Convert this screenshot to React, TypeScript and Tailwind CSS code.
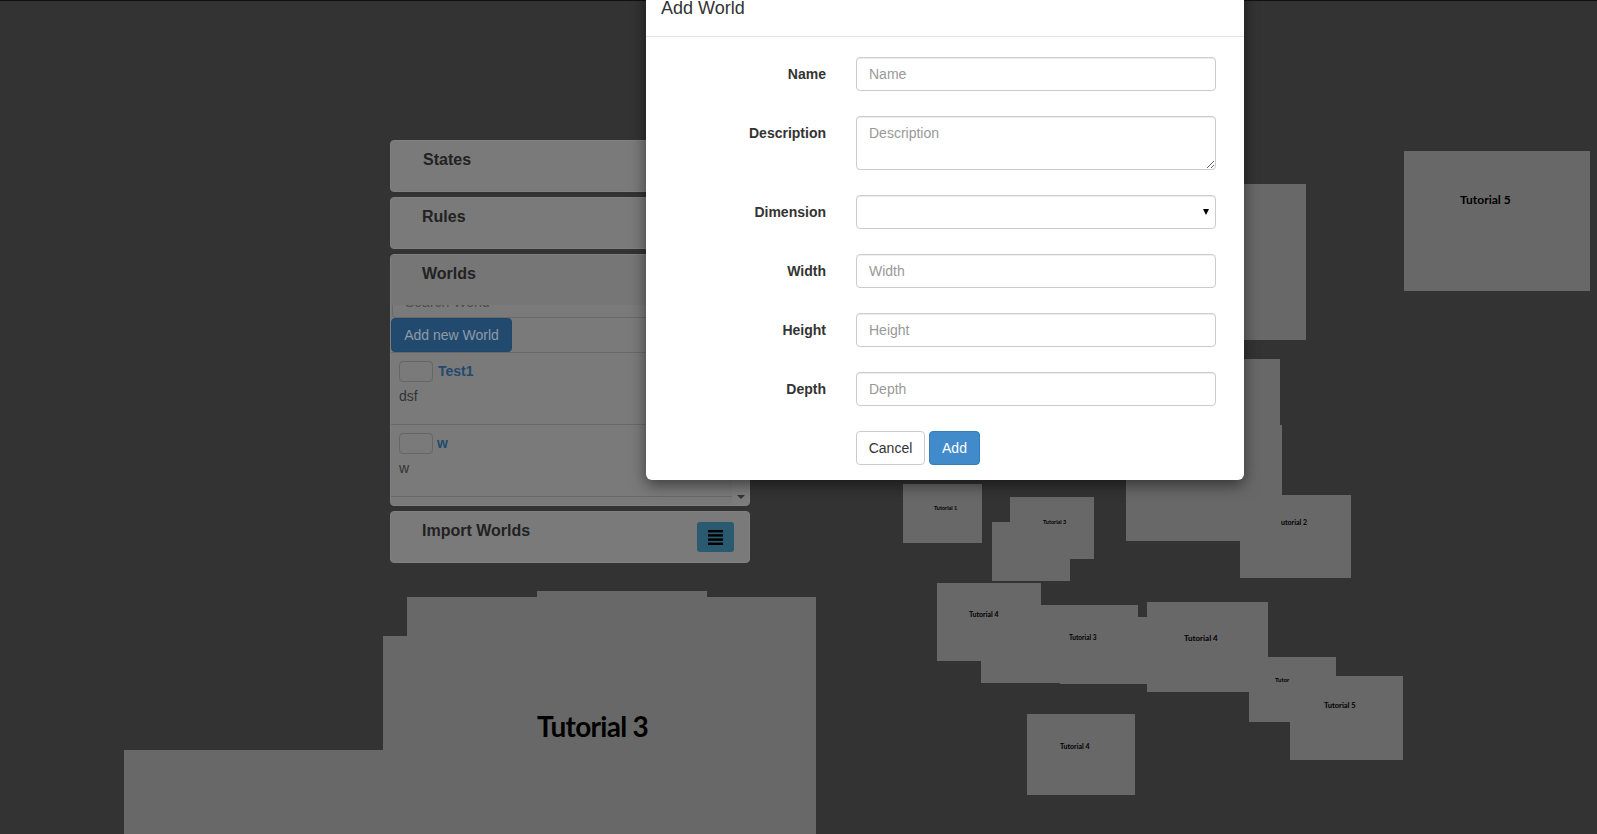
const blocks = [
  "left-[124px] top-[750px] w-[692px] h-[84px]",
  "left-[383px] top-[636px] w-[433px] h-[198px]",
  "left-[407px] top-[597px] w-[409px] h-[237px]",
  "left-[537px] top-[591px] w-[170px] h-[100px]",
  "left-[1404px] top-[151px] w-[186px] h-[140px]",
  "left-[1100px] top-[184px] w-[206px] h-[156px]",
  "left-[1100px] top-[359px] w-[180px] h-[70px]",
  "left-[1126px] top-[425px] w-[156px] h-[116px]",
  "left-[1240px] top-[495px] w-[111px] h-[83px]",
  "left-[903px] top-[484px] w-[79px] h-[59px]",
  "left-[1010px] top-[497px] w-[84px] h-[62px]",
  "left-[992px] top-[522px] w-[78px] h-[59px]",
  "left-[937px] top-[583px] w-[104px] h-[78px]",
  "left-[981px] top-[605px] w-[157px] h-[78px]",
  "left-[1060px] top-[617px] w-[90px] h-[67px]",
  "left-[1147px] top-[602px] w-[121px] h-[90px]",
  "left-[1249px] top-[657px] w-[87px] h-[65px]",
  "left-[1290px] top-[676px] w-[113px] h-[84px]",
  "left-[1027px] top-[714px] w-[108px] h-[81px]",
];

const captions = [
  { text: "Tutorial 3", className: "left-[537px] top-[708px] text-[28px] leading-[36px] tracking-[-0.7px]" },
  { text: "Tutorial 5", className: "left-[1460px] top-[192px] text-[12px] leading-[16px]" },
  { text: "Tutorial 1", className: "left-[934px] top-[504px] text-[5.5px] leading-[8px]" },
  { text: "Tutorial 3", className: "left-[1043px] top-[518px] text-[5.5px] leading-[8px]" },
  { text: "utorial 2", className: "left-[1281px] top-[517px] text-[7px] leading-[10px]" },
  { text: "Tutorial 4", className: "left-[969px] top-[609px] text-[7px] leading-[10px]" },
  { text: "Tutorial 3", className: "left-[1069px] top-[633px] text-[6.5px] leading-[10px]" },
  { text: "Tutorial 4", className: "left-[1184px] top-[632px] text-[8px] leading-[12px]" },
  { text: "Tutor", className: "left-[1275px] top-[675px] text-[6px] leading-[10px]" },
  { text: "Tutorial 5", className: "left-[1324px] top-[701px] text-[7.5px] leading-[10px]" },
  { text: "Tutorial 4", className: "left-[1060px] top-[741px] text-[7px] leading-[10px]" },
];

const fields = [
  { label: "Name", h: "h-[34px]" },
  { label: "Description", h: "h-[54px]", area: true },
  { label: "Dimension", h: "h-[34px]", select: true },
  { label: "Width", h: "h-[34px]" },
  { label: "Height", h: "h-[34px]" },
  { label: "Depth", h: "h-[34px]" },
];

const inputClass =
  "block w-full rounded border border-[#ccc] bg-white px-3 py-1.5 text-sm leading-5 text-[#555] shadow-[inset_0_1px_1px_rgba(0,0,0,0.075)] placeholder:text-[#999]";

function Panel({ title, left = "pl-8" }: { title: string; left?: string }) {
  return (
    <div className="h-[52px] rounded border border-[#808080] bg-[#7a7a7a]">
      <h3 className={`pt-[7px] text-base leading-[23px] font-bold text-[#222] ${left}`}>{title}</h3>
    </div>
  );
}

function WorldRow({ name, desc, gap }: { name: string; desc: string; gap: string }) {
  return (
    <div className="h-[72px] border-b border-[#696969] px-2 pt-2">
      <div className={`flex items-center ${gap}`}>
        <span className="h-[21px] w-[34px] rounded border border-[#666] bg-[#7a7a7a]" />
        <a className="-mt-[1px] text-sm leading-5 font-bold text-[#224a6e]">{name}</a>
      </div>
      <p className="mt-[4px] text-sm leading-5 text-[#333]">{desc}</p>
    </div>
  );
}

export default function App() {
  return (
    <div className="relative h-[834px] w-full overflow-hidden bg-[#333] font-['Liberation_Sans',Arial,sans-serif]">
      {/* world tiles on the canvas */}
      {blocks.map((b) => (
        <div key={b} className={`absolute bg-[#686868] ${b}`} />
      ))}
      {captions.map((c) => (
        <span
          key={c.className}
          className={`absolute font-['Lato',sans-serif] font-bold whitespace-nowrap text-black ${c.className}`}
        >
          {c.text}
        </span>
      ))}

      {/* thin dark line along the top of the page */}
      <div className="absolute inset-x-0 top-0 h-px bg-[#111]" />

      {/* side panels */}
      <div className="relative ml-[390px] flex w-[360px] flex-col gap-[5px] pt-[140px]">
        <Panel title="States" />
        <Panel title="Rules" left="pl-[31px]" />

        <div className="flex h-[252px] flex-col overflow-hidden rounded border border-[#808080] bg-[#7a7a7a]">
          <div className="h-[50px] shrink-0 bg-[#767676] pt-[7px] pl-[31px] text-base leading-[23px] font-bold text-[#222]">
            Worlds
          </div>
          <div className="flex min-h-0 flex-1">
            <div className="min-w-0 flex-1 overflow-hidden">
              <div className="h-[13px] overflow-hidden">
                <div className="-mt-[15px] ml-[1px] h-[28px] rounded border border-[#696969] pt-[1px] pl-[12px] text-sm leading-5 text-[#4d4d4d]">
                  Search World
                </div>
              </div>
              <div className="border-b border-[#696969]">
                <button className="block h-[34px] w-[121px] rounded-[4px] border border-[#20466a] bg-[#224a6e] text-sm text-[#8e9aa6]">
                  Add new World
                </button>
              </div>
              <WorldRow name="Test1" desc="dsf" gap="gap-[5px]" />
              <WorldRow name="w" desc="w" gap="gap-[4px]" />
            </div>
            <div className="flex w-[17px] shrink-0 items-end justify-center bg-[#7d7d7d] pb-[6px]">
              <span className="border-x-[4px] border-t-[4px] border-x-transparent border-t-[#333]" />
            </div>
          </div>
        </div>

        <div className="flex h-[52px] justify-between rounded border border-[#808080] bg-[#7a7a7a] pr-[15px] pl-[31px]">
          <h3 className="pt-[7px] text-base leading-[23px] font-bold text-[#222]">Import Worlds</h3>
          <button className="mt-[10px] flex h-[30px] w-[37px] items-center justify-center rounded-[3px] bg-[#2a5a70]">
            <svg width="15" height="15" viewBox="0 0 15 15" fill="#000">
              <rect x="0" y="0" width="15" height="2.4" />
              <rect x="0" y="4.2" width="15" height="2.4" />
              <rect x="0" y="8.4" width="15" height="2.4" />
              <rect x="0" y="12.6" width="15" height="2.4" />
            </svg>
          </button>
        </div>
      </div>

      {/* modal */}
      <div className="absolute top-0 left-[646px] -mt-[20px] w-[598px] rounded-md bg-white shadow-[0_5px_15px_rgba(0,0,0,0.5)]">
        <div className="h-[57px] border-b border-[#e5e5e5] px-[15px] py-[15px] text-lg leading-[26px] text-[#333]">
          Add World
        </div>
        <form className="flex flex-col gap-[25px] px-[28px] pt-[20px] pb-[15px] text-sm">
          {fields.map((f) => (
            <div key={f.label} className="flex items-start">
              <label className="w-[152px] shrink-0 pt-[7px] text-right leading-5 font-bold text-[#333]">
                {f.label}
              </label>
              <div className="relative ml-[30px] flex-1">
                {f.area ? (
                  <textarea placeholder={f.label} className={`${inputClass} ${f.h}`} />
                ) : f.select ? (
                  <>
                    <select className={`${inputClass} ${f.h} appearance-none`} />
                    <span className="absolute top-[14px] right-[7px] border-x-[3px] border-t-[6px] border-x-transparent border-t-black" />
                  </>
                ) : (
                  <input placeholder={f.label} className={`${inputClass} ${f.h}`} />
                )}
              </div>
            </div>
          ))}
          <div className="ml-[182px] flex gap-[4px]">
            <button
              type="button"
              className="h-[34px] w-[69px] rounded border border-[#ccc] bg-white text-sm text-[#333]"
            >
              Cancel
            </button>
            <button
              type="button"
              className="h-[34px] w-[51px] rounded border border-[#357ebd] bg-[#428bca] text-sm text-white"
            >
              Add
            </button>
          </div>
        </form>
      </div>
    </div>
  );
}
